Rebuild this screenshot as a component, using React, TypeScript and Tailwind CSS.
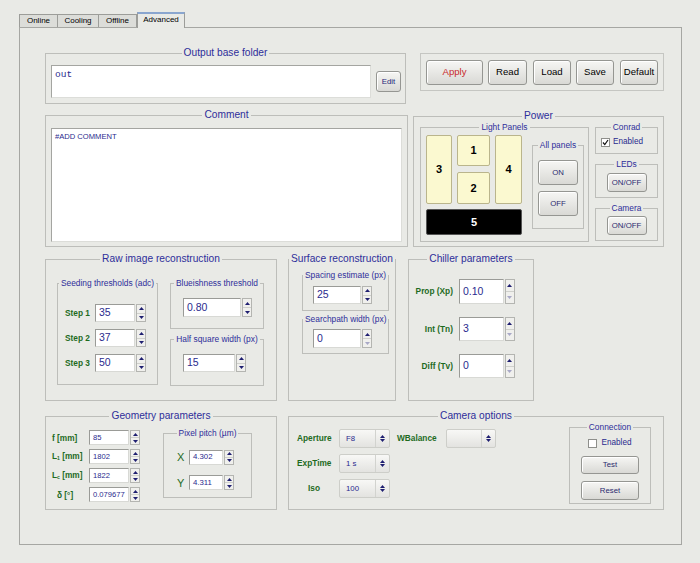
import type { ReactNode } from "react";

const FONT = "font-['Liberation_Sans',Arial,sans-serif]";

function Group({
  title,
  small = false,
  className = "",
  children,
}: {
  title: string;
  small?: boolean;
  className?: string;
  children?: ReactNode;
}) {
  return (
    <fieldset className={`shrink-0 border border-[#bdbeba] ${className}`}>
      <legend
        className={
          small
            ? "mx-auto px-[2px] text-[8.4px] leading-[10px] text-[#2e2e9a]"
            : "mx-auto px-[2px] text-[10.2px] leading-[12px] text-[#2e2e9a]"
        }
      >
        {title}
      </legend>
      {children}
    </fieldset>
  );
}

function Arrow({ down = false, dim = false }: { down?: boolean; dim?: boolean }) {
  return (
    <svg width="5" height="3" viewBox="0 0 5 3" className={dim ? "fill-[#a8a8c6]" : "fill-[#1e1e70]"}>
      <path d={down ? "M0 0H5L2.5 3Z" : "M0 3H5L2.5 0Z"} />
    </svg>
  );
}

function Spin({
  value,
  w,
  h,
  text = "text-[10.5px]",
  dimDown = false,
}: {
  value: string;
  w: string;
  h: string;
  text?: string;
  dimDown?: boolean;
}) {
  return (
    <div className={`flex shrink-0 ${w} ${h}`}>
      <div
        className={`flex-1 flex items-center pl-[3px] bg-white border border-[#9a9b97] border-b-[#d8d9d5] border-r-[#d8d9d5] text-[#2a2a8e] ${text}`}
      >
        {value}
      </div>
      <div className="w-[10px] ml-px flex flex-col border border-[#b4b5b1] bg-[#f0f0ed]">
        <div className="flex-1 flex items-center justify-center border-b border-[#cfd0cc]">
          <Arrow />
        </div>
        <div className="flex-1 flex items-center justify-center">
          <Arrow down dim={dimDown} />
        </div>
      </div>
    </div>
  );
}

function Combo({ value, w = "w-[51px]" }: { value: string; w?: string }) {
  return (
    <div
      className={`flex shrink-0 ${w} h-[19px] border border-[#cdcec9] rounded-[2px] bg-linear-to-b from-[#f8f8f6] to-[#e3e3e0]`}
    >
      <div className="flex-1 flex items-center pl-[6px] text-[7.8px] text-[#2a2a8e]">{value}</div>
      <div className="w-[14px] border-l border-[#d2d3cf] flex flex-col items-center justify-center gap-[1px]">
        <Arrow />
        <Arrow down />
      </div>
    </div>
  );
}

function Btn({
  label,
  className = "",
  text = "text-[9.6px] text-black",
}: {
  label: string;
  className?: string;
  text?: string;
}) {
  return (
    <div
      className={`flex shrink-0 items-center justify-center border border-[#959692] rounded-[3px] bg-linear-to-b from-[#f6f6f4] to-[#d9d9d5] shadow-[inset_1px_1px_0_#ffffff] ${text} ${className}`}
    >
      {label}
    </div>
  );
}

function Check({ checked = false }: { checked?: boolean }) {
  return (
    <div className="w-[9px] h-[9px] shrink-0 bg-white border border-[#8e8f8b] flex items-center justify-center">
      {checked && (
        <svg width="7" height="7" viewBox="0 0 7 7">
          <path d="M1 3.5L2.8 5.6L6 1" stroke="#111" strokeWidth="1.2" fill="none" />
        </svg>
      )}
    </div>
  );
}

function Tile({ label, className }: { label: string; className: string }) {
  return (
    <div
      className={`flex items-center justify-center rounded-[2px] border border-[#bab58c] bg-[#fbf9d0] text-[11px] font-bold ${className}`}
    >
      {label}
    </div>
  );
}

function Tabs() {
  return (
    <div className="flex items-end h-[15px] text-[8px] text-black">
      <div className="w-[38px] h-[13px] border-t border-l border-[#9c9d99] bg-[#dcddd9] text-center leading-[12px]">
        Online
      </div>
      <div className="w-[41px] h-[13px] border-t border-l border-[#9c9d99] bg-[#dcddd9] text-center leading-[12px]">
        Cooling
      </div>
      <div className="w-[39px] h-[13px] border-t border-x border-[#9c9d99] bg-[#dcddd9] text-center leading-[12px]">
        Offline
      </div>
      <div className="relative z-10 -mb-px w-[48px] h-[16px] border-x border-t-2 border-[#9c9d99] border-t-[#8aa6cf] bg-[#e9eae6] text-center leading-[12px]">
        Advanced
      </div>
    </div>
  );
}

const LBL = "text-[8.3px] font-bold text-[#1e6a1e]";
const SMALLBTN = "text-[7.8px] text-[#2a2a6e]";

export default function App() {
  return (
    <div className={`w-[700px] h-[563px] bg-[#e9eae6] pt-[12px] pl-[19px] text-black whitespace-nowrap ${FONT}`}>
      <Tabs />
      <div className="w-[663px] h-[518px] border border-[#a6a7a3] pl-[25px] pt-[19px]">
        {/* row 1 */}
        <div className="flex items-start">
          <Group title="Output base folder" className="w-[361px] h-[57px]">
            <div className="flex items-start pl-[5px] pt-[6px]">
              <div className="w-[320px] h-[33px] bg-white border border-[#a4a5a1] border-b-[#dcddd9] border-r-[#dcddd9] pl-[3px] pt-[3px] font-['Liberation_Mono',monospace] text-[9.5px] leading-[12px] text-[#2a2a8e]">
                out
              </div>
              <Btn label="Edit" className="ml-[5px] mt-[6px] w-[25px] h-[21px]" text="text-[7.8px] text-[#1e1e78]" />
            </div>
          </Group>
          <div className="ml-[14px] mt-[6px] w-[244px] h-[38px] border border-[#c5c6c2] flex items-start pl-[5px] pt-[6px]">
            <Btn label="Apply" className="w-[57px] h-[25px]" text="text-[9.6px] text-[#c8282c]" />
            <Btn label="Read" className="ml-[5px] w-[39px] h-[25px]" />
            <Btn label="Load" className="ml-[6px] w-[38px] h-[25px]" />
            <Btn label="Save" className="ml-[5px] w-[38px] h-[25px]" />
            <Btn label="Default" className="ml-[6px] w-[38px] h-[25px]" />
          </div>
        </div>

        {/* row 2 */}
        <div className="flex items-start mt-[5px]">
          <Group title="Comment" className="w-[363px] h-[138px]">
            <div className="pl-[5px] pt-[7px]">
              <div className="w-[351px] h-[114px] bg-white border border-[#a4a5a1] border-b-[#dcddd9] border-r-[#dcddd9] pl-[3px] pt-[2px] text-[7.6px] leading-[12px] text-[#2a2a8e]">
                #ADD COMMENT
              </div>
            </div>
          </Group>
          <Group title="Power" className="ml-[5px] mt-px w-[251px] h-[137px]">
            <div className="flex items-start pl-[6px]">
              <Group small title="Light Panels" className="w-[169px] h-[120px]">
                <div className="flex items-start pl-[5px] pt-[3px]">
                  <div className="flex flex-col">
                    <div className="flex items-start">
                      <Tile label="3" className="w-[26px] h-[69px]" />
                      <div className="ml-[5px] flex flex-col">
                        <Tile label="1" className="w-[33px] h-[31px]" />
                        <Tile label="2" className="mt-[6px] w-[33px] h-[32px]" />
                      </div>
                      <Tile label="4" className="ml-[5px] w-[27px] h-[69px]" />
                    </div>
                    <div className="mt-[5px] w-[96px] h-[26px] rounded-[2px] bg-black border border-[#555] flex items-center justify-center text-[11px] font-bold text-white">
                      5
                    </div>
                  </div>
                  <Group small title="All panels" className="ml-[10px] mt-[5px] w-[52px] h-[89px]">
                    <div className="pl-[5px] pt-[10px]">
                      <Btn label="ON" className="w-[40px] h-[25px]" text={SMALLBTN} />
                      <Btn label="OFF" className="mt-[6px] w-[40px] h-[25px]" text={SMALLBTN} />
                    </div>
                  </Group>
                </div>
              </Group>
              <div className="ml-[6px] flex flex-col">
                <Group small title="Conrad" className="w-[63px] h-[32px]">
                  <div className="flex items-center pl-[5px] pt-[5px]">
                    <Check checked />
                    <span className="ml-[3px] text-[8.2px] leading-[10px] text-[#2a2a8e]">Enabled</span>
                  </div>
                </Group>
                <Group small title="LEDs" className="mt-[5px] w-[63px] h-[39px]">
                  <Btn label="ON/OFF" className="mx-auto mt-[4px] w-[40px] h-[19px]" text={SMALLBTN} />
                </Group>
                <Group small title="Camera" className="mt-[5px] w-[63px] h-[38px]">
                  <Btn label="ON/OFF" className="mx-auto mt-[3px] w-[40px] h-[19px]" text={SMALLBTN} />
                </Group>
              </div>
            </div>
          </Group>
        </div>

        {/* row 3 */}
        <div className="flex items-start mt-[6px]">
          <Group title="Raw image reconstruction" className="w-[232px] h-[148px]">
            <div className="flex items-start pl-[11px] pt-[13px]">
              <Group small title="Seeding thresholds (adc)" className="w-[101px] h-[107px]">
                <div className="flex flex-col gap-[7px] pl-[7px] pt-[16px]">
                  {[
                    ["Step 1", "35"],
                    ["Step 2", "37"],
                    ["Step 3", "50"],
                  ].map(([l, v]) => (
                    <div key={l} className="flex items-center">
                      <div className={`w-[30px] ${LBL}`}>{l}</div>
                      <Spin value={v} w="w-[51px]" h="h-[18px]" />
                    </div>
                  ))}
                </div>
              </Group>
              <div className="ml-[12px] flex flex-col">
                <Group small title="Blueishness threshold" className="w-[94px] h-[51px]">
                  <div className="pl-[12px] pt-[10px]">
                    <Spin value="0.80" w="w-[69px]" h="h-[19px]" />
                  </div>
                </Group>
                <Group small title="Half square width (px)" className="mt-[5px] w-[94px] h-[52px]">
                  <div className="pl-[12px] pt-[10px]">
                    <Spin value="15" w="w-[63px]" h="h-[18px]" />
                  </div>
                </Group>
              </div>
            </div>
          </Group>

          <Group title="Surface reconstruction" className="ml-[11px] w-[107px] h-[148px]">
            <div className="flex flex-col pl-[13px]">
              <Group small title="Spacing estimate (px)" className="mt-[5px] w-[81px] h-[41px]">
                <div className="pl-[10px] pt-[6px]">
                  <Spin value="25" w="w-[59px]" h="h-[18px]" />
                </div>
              </Group>
              <Group small title="Searchpath width (px)" className="mt-[3px] w-[81px] h-[40px]">
                <div className="pl-[10px] pt-[5px]">
                  <Spin value="0" w="w-[59px]" h="h-[19px]" dimDown />
                </div>
              </Group>
            </div>
          </Group>

          <Group title="Chiller parameters" className="ml-[12px] w-[126px] h-[148px]">
            <div className="flex flex-col gap-[13px] pt-[14px]">
              {[
                ["Prop (Xp)", "0.10", "h-[25px]"],
                ["Int (Tn)", "3", "h-[24px]"],
                ["Diff (Tv)", "0", "h-[24px]"],
              ].map(([l, v, h]) => (
                <div key={l} className="flex items-center">
                  <div className={`w-[44px] text-right ${LBL}`}>{l}</div>
                  <div className="ml-[6px]">
                    <Spin value={v} w="w-[56px]" h={h} dimDown />
                  </div>
                </div>
              ))}
            </div>
          </Group>
        </div>

        {/* row 4 */}
        <div className="flex items-start mt-[9px]">
          <Group title="Geometry parameters" className="w-[232px] h-[100px]">
            <div className="flex items-start">
              <div className="flex flex-col gap-[4px] pl-[6px] pt-[8px]">
                {[
                  ["f", "", "85"],
                  ["L", "1", "1802"],
                  ["L", "c", "1822"],
                  ["δ", "", "0.079677"],
                ].map(([l, sub, v], i) => (
                  <div key={i} className="flex items-center h-[15px]">
                    <div className={`w-[37px] leading-[10px] ${LBL} ${i === 3 ? "pl-[5px]" : ""}`}>
                      {l}
                      {sub && <span className="text-[5px] align-[-1px]">{sub}</span>}
                      {i === 3 ? " [°]" : " [mm]"}
                    </div>
                    <Spin value={v} w="w-[51px]" h="h-[15px]" text="text-[7.6px]" />
                  </div>
                ))}
              </div>
              <Group small title="Pixel pitch (µm)" className="ml-[23px] mt-[6px] w-[89px] h-[70px]">
                <div className="flex flex-col gap-[9px] pl-[13px] pt-[11px]">
                  {[
                    ["X", "4.302"],
                    ["Y", "4.311"],
                  ].map(([l, v]) => (
                    <div key={l} className="flex items-center">
                      <div className="w-[12px] text-[11px] text-[#1e6a1e]">{l}</div>
                      <Spin value={v} w="w-[45px]" h="h-[15px]" text="text-[7.8px]" />
                    </div>
                  ))}
                </div>
              </Group>
            </div>
          </Group>

          <Group title="Camera options" className="ml-[11px] w-[376px] h-[100px]">
            <div className="flex items-start pl-[8px]">
              <div className="flex flex-col gap-[6px] pt-[7px]">
                <div className="flex items-center">
                  <div className={`w-[34px] text-center ${LBL}`}>Aperture</div>
                  <div className="ml-[8px]">
                    <Combo value="F8" />
                  </div>
                  <div className={`ml-[7px] w-[49px] ${LBL}`}>WBalance</div>
                  <Combo value="" w="w-[50px]" />
                </div>
                <div className="flex items-center">
                  <div className={`w-[34px] text-center ${LBL}`}>ExpTime</div>
                  <div className="ml-[8px]">
                    <Combo value="1 s" />
                  </div>
                </div>
                <div className="flex items-center">
                  <div className={`w-[34px] text-center ${LBL}`}>Iso</div>
                  <div className="ml-[8px]">
                    <Combo value="100" />
                  </div>
                </div>
              </div>
              <Group small title="Connection" className="ml-[73px] w-[82px] h-[82px]">
                <div className="flex flex-col items-center pt-[6px]">
                  <div className="flex items-center">
                    <Check />
                    <span className="ml-[4px] text-[8.2px] leading-[10px] text-[#2a2a8e]">Enabled</span>
                  </div>
                  <Btn label="Test" className="mt-[8px] w-[58px] h-[18px]" text={SMALLBTN} />
                  <Btn label="Reset" className="mt-[7px] w-[58px] h-[19px]" text={SMALLBTN} />
                </div>
              </Group>
            </div>
          </Group>
        </div>
      </div>
    </div>
  );
}
